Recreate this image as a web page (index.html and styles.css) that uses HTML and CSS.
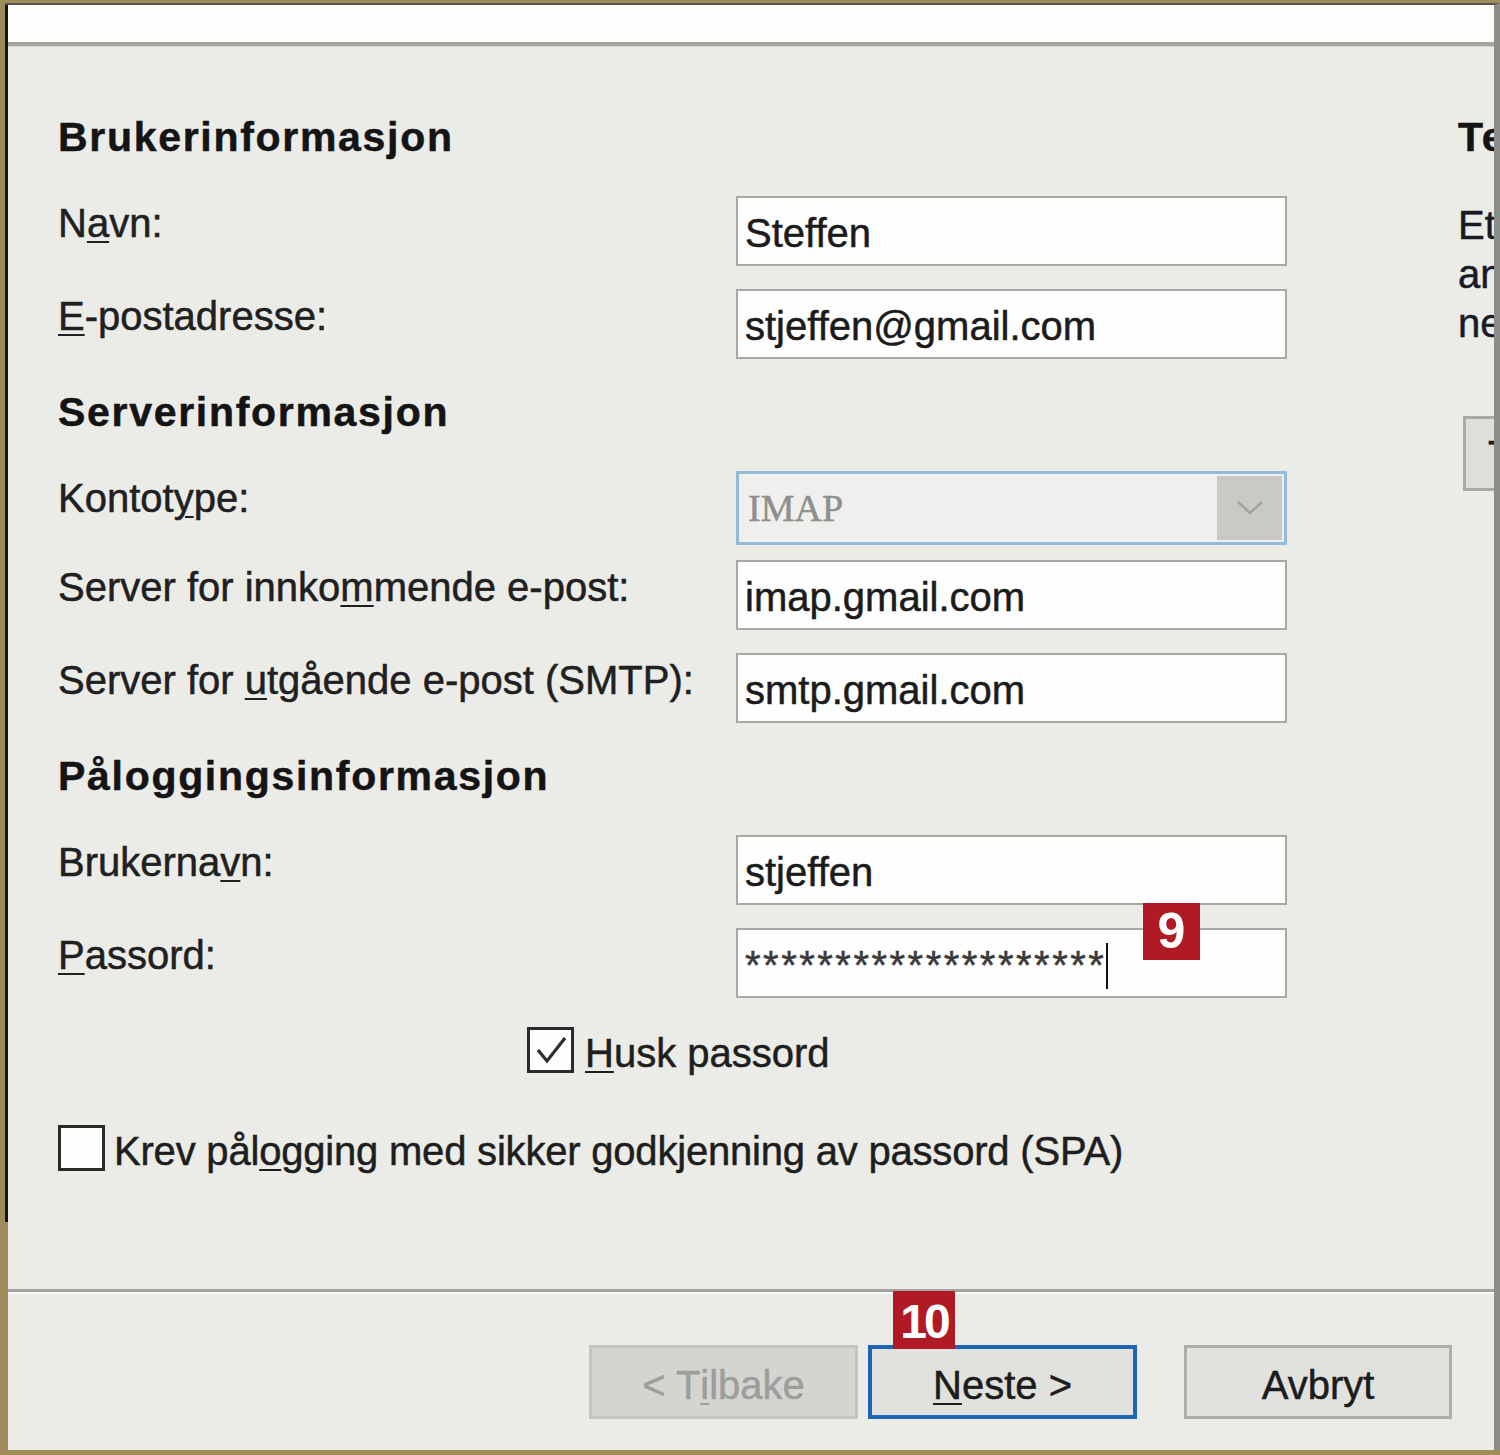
FILE: index.html
```html
<!DOCTYPE html>
<html lang="no">
<head>
<meta charset="utf-8">
<title>Kontoinnstillinger</title>
<link rel="stylesheet" href="styles.css">
</head>
<body>
<div class="window">
  <div class="header"></div>
  <div class="main">
    <div class="form">
      <h2 class="section">Brukerinformasjon</h2>
      <div class="row">
        <div class="label">N<u>a</u>vn:</div>
        <div class="field">Steffen</div>
      </div>
      <div class="row">
        <div class="label"><u>E</u>-postadresse:</div>
        <div class="field">stjeffen@gmail.com</div>
      </div>

      <h2 class="section">Serverinformasjon</h2>
      <div class="row row-select">
        <div class="label">Kontot<u>y</u>pe:</div>
        <div class="select">
          <span class="select-value">IMAP</span>
          <span class="select-arrow">
            <svg width="30" height="18" viewBox="0 0 30 18"><polyline points="3,3 15,14 27,3" fill="none" stroke="#a2a3a0" stroke-width="2.5"/></svg>
          </span>
        </div>
      </div>
      <div class="row">
        <div class="label">Server for innko<u>m</u>mende e-post:</div>
        <div class="field">imap.gmail.com</div>
      </div>
      <div class="row">
        <div class="label">Server for <u>u</u>tgående e-post (SMTP):</div>
        <div class="field">smtp.gmail.com</div>
      </div>

      <h2 class="section">Påloggingsinformasjon</h2>
      <div class="row">
        <div class="label">Brukerna<u>v</u>n:</div>
        <div class="field">stjeffen</div>
      </div>
      <div class="row">
        <div class="label"><u>P</u>assord:</div>
        <div class="field password"><span class="stars">********************</span><span class="caret"></span><span class="badge badge-9">9</span></div>
      </div>

      <div class="check check-remember">
        <span class="box">
          <svg width="40" height="40" viewBox="0 0 40 40"><polyline points="7,20 16,31 34,8" fill="none" stroke="#2e2e2e" stroke-width="3.2"/></svg>
        </span>
        <span class="check-text"><u>H</u>usk passord</span>
      </div>
      <div class="check check-spa">
        <span class="box"></span>
        <span class="check-text">Krev pål<u>o</u>gging med sikker godkjenning av passord (SPA)</span>
      </div>
    </div>

    <div class="side">
      <h2 class="section">Test kontoinnstillinger</h2>
      <p class="side-text">Etter at du har fylt ut informasjonen på dette skjermbildet,<br>anbefaler vi at du tester kontoen ved å klikke knappen<br>nedenfor. (Krever nettverkstilkobling)</p>
      <div class="side-button">Test kontoinnstillinger ...</div>
    </div>
  </div>
  <div class="separator"></div>
  <div class="footer">
    <div class="btn btn-disabled">&lt; T<u>i</u>lbake</div>
    <div class="btn btn-default"><u>N</u>este &gt;<span class="badge badge-10">10</span></div>
    <div class="btn btn-cancel">Avbryt</div>
  </div>
</div>
</body>
</html>
```
FILE: styles.css
```css
html, body {
  margin: 0;
  padding: 0;
}

body {
  width: 1500px;
  height: 1455px;
  overflow: hidden;
  background: #9e8c5b;
  font-family: "Liberation Sans", Arial, sans-serif;
  color: #1c1c1c;
  -webkit-text-stroke: 0.5px currentColor;
}

.window {
  box-sizing: border-box;
  margin: 3px 0 0 5px;
  width: 1495px;
  height: 1447px;
  border-top: 2px solid #56544b;
  border-right: 6px solid #8c8c89;
  padding-left: 3px;
  background:
    linear-gradient(#161616, #161616) 0 0 / 3px 1217px no-repeat,
    linear-gradient(#9e8c5b, #9e8c5b) 0 1217px / 3px 300px no-repeat,
    #ebebe7;
  display: flex;
  flex-direction: column;
  overflow: hidden;
}

.header {
  height: 37px;
  flex-shrink: 0;
  background: #fdfdfb;
  border-bottom: 4px solid #a4a4a0;
  box-shadow: 0 1px 0 #d2d2ce;
}

.main {
  box-sizing: border-box;
  height: 1243px;
  flex-shrink: 0;
  display: flex;
  padding: 67px 0 0 50px;
}

.form {
  width: 1229px;
  flex-shrink: 0;
}

u {
  text-decoration-thickness: 2px;
  text-underline-offset: 4px;
}

.section {
  margin: 29px 0 35px;
  font-size: 41px;
  font-weight: bold;
  letter-spacing: 1.7px;
  line-height: 48px;
  height: 48px;
  color: #141414;
  white-space: nowrap;
}

.form > .section:first-child,
.side > .section {
  margin-top: 0;
}

.row {
  display: flex;
  height: 70px;
  margin-bottom: 23px;
}

.row-select {
  height: 74px;
  margin-bottom: 15px;
}

.label {
  width: 678px;
  flex-shrink: 0;
  padding-top: 3px;
  font-size: 40px;
  line-height: 48px;
  color: #202020;
  white-space: nowrap;
}

.field {
  box-sizing: border-box;
  position: relative;
  width: 551px;
  height: 70px;
  border: 2px solid #a8a8a5;
  background: #fefefe;
  padding: 4px 7px 0;
  font-size: 40px;
  line-height: 62px;
  color: #1b1b1b;
  white-space: nowrap;
}

.stars {
  letter-spacing: 2.5px;
  color: #3a3a3a;
}

.caret {
  display: inline-block;
  width: 2px;
  height: 46px;
  background: #111;
  vertical-align: -10px;
  margin-left: 0;
}

.select {
  box-sizing: border-box;
  width: 551px;
  height: 74px;
  border: 3px solid #96bbd9;
  background: #efefed;
  display: flex;
  align-items: center;
}

.select-value {
  padding-left: 9px;
  font-family: "Liberation Serif", "Times New Roman", serif;
  font-size: 38px;
  color: #8f8f8c;
}

.select-arrow {
  margin: 2px 2px 2px auto;
  width: 65px;
  height: 64px;
  background: #c9cac6;
  display: flex;
  align-items: center;
  justify-content: center;
}

.check {
  display: flex;
  align-items: center;
}

.check-remember {
  margin: 25px 0 0 469px;
}

.check-spa {
  margin-top: 44px;
}

.box {
  box-sizing: border-box;
  width: 47px;
  height: 46px;
  border: 3px solid #2a2a2a;
  background: #fefefe;
  flex-shrink: 0;
  display: flex;
  align-items: center;
  justify-content: center;
}

.check-text {
  padding-top: 6px;
  font-size: 40px;
  line-height: 48px;
  color: #1e1e1e;
  white-space: nowrap;
}

.check-remember .check-text {
  margin-left: 11px;
}

.check-spa .check-text {
  margin-left: 9px;
  letter-spacing: -0.2px;
}

.side {
  margin-left: 171px;
  flex-shrink: 0;
  white-space: nowrap;
}

.side-text {
  margin: 40px 0 0;
  font-size: 40px;
  line-height: 49px;
  color: #1a1a26;
}

.side-button {
  box-sizing: border-box;
  margin: 68px 0 0 5px;
  height: 75px;
  width: 520px;
  border: 3px solid #a9a9a6;
  background: #dededa;
  padding: 6px 0 0 22px;
  font-size: 40px;
  line-height: 60px;
  color: #1c1c1c;
}

.separator {
  height: 0;
  flex-shrink: 0;
  border-top: 3px solid #a3a39f;
  border-bottom: 2px solid #fbfbf9;
}

.footer {
  flex: 1;
  display: flex;
  justify-content: flex-end;
  align-items: flex-start;
  padding: 51px 42px 0 0;
}

.btn {
  box-sizing: border-box;
  position: relative;
  width: 269px;
  height: 74px;
  display: flex;
  align-items: center;
  justify-content: center;
  padding-top: 6px;
  font-size: 40px;
  color: #1c1c1c;
  white-space: nowrap;
}

.btn-disabled {
  background: #d4d5d1;
  border: 3px solid #c4c5c1;
  color: #9d9e9b;
}

.btn-default {
  margin-left: 10px;
  background: #e1e1dd;
  border: 4px solid #1d65b6;
}

.btn-cancel {
  margin-left: 47px;
  width: 268px;
  background: #e1e1dd;
  border: 3px solid #adadaa;
}

.badge {
  position: absolute;
  display: flex;
  align-items: center;
  justify-content: center;
  background: #b01a25;
  color: #ffffff;
  font-weight: bold;
  font-family: "Liberation Sans", Arial, sans-serif;
  -webkit-text-stroke: 0;
}

.badge-9 {
  left: 405px;
  top: -27px;
  width: 57px;
  height: 57px;
  font-size: 50px;
  line-height: 57px;
}

.badge-10 {
  left: 21px;
  top: -58px;
  width: 62px;
  height: 56px;
  font-size: 48px;
  letter-spacing: -3px;
  padding-top: 2px;
}
```
